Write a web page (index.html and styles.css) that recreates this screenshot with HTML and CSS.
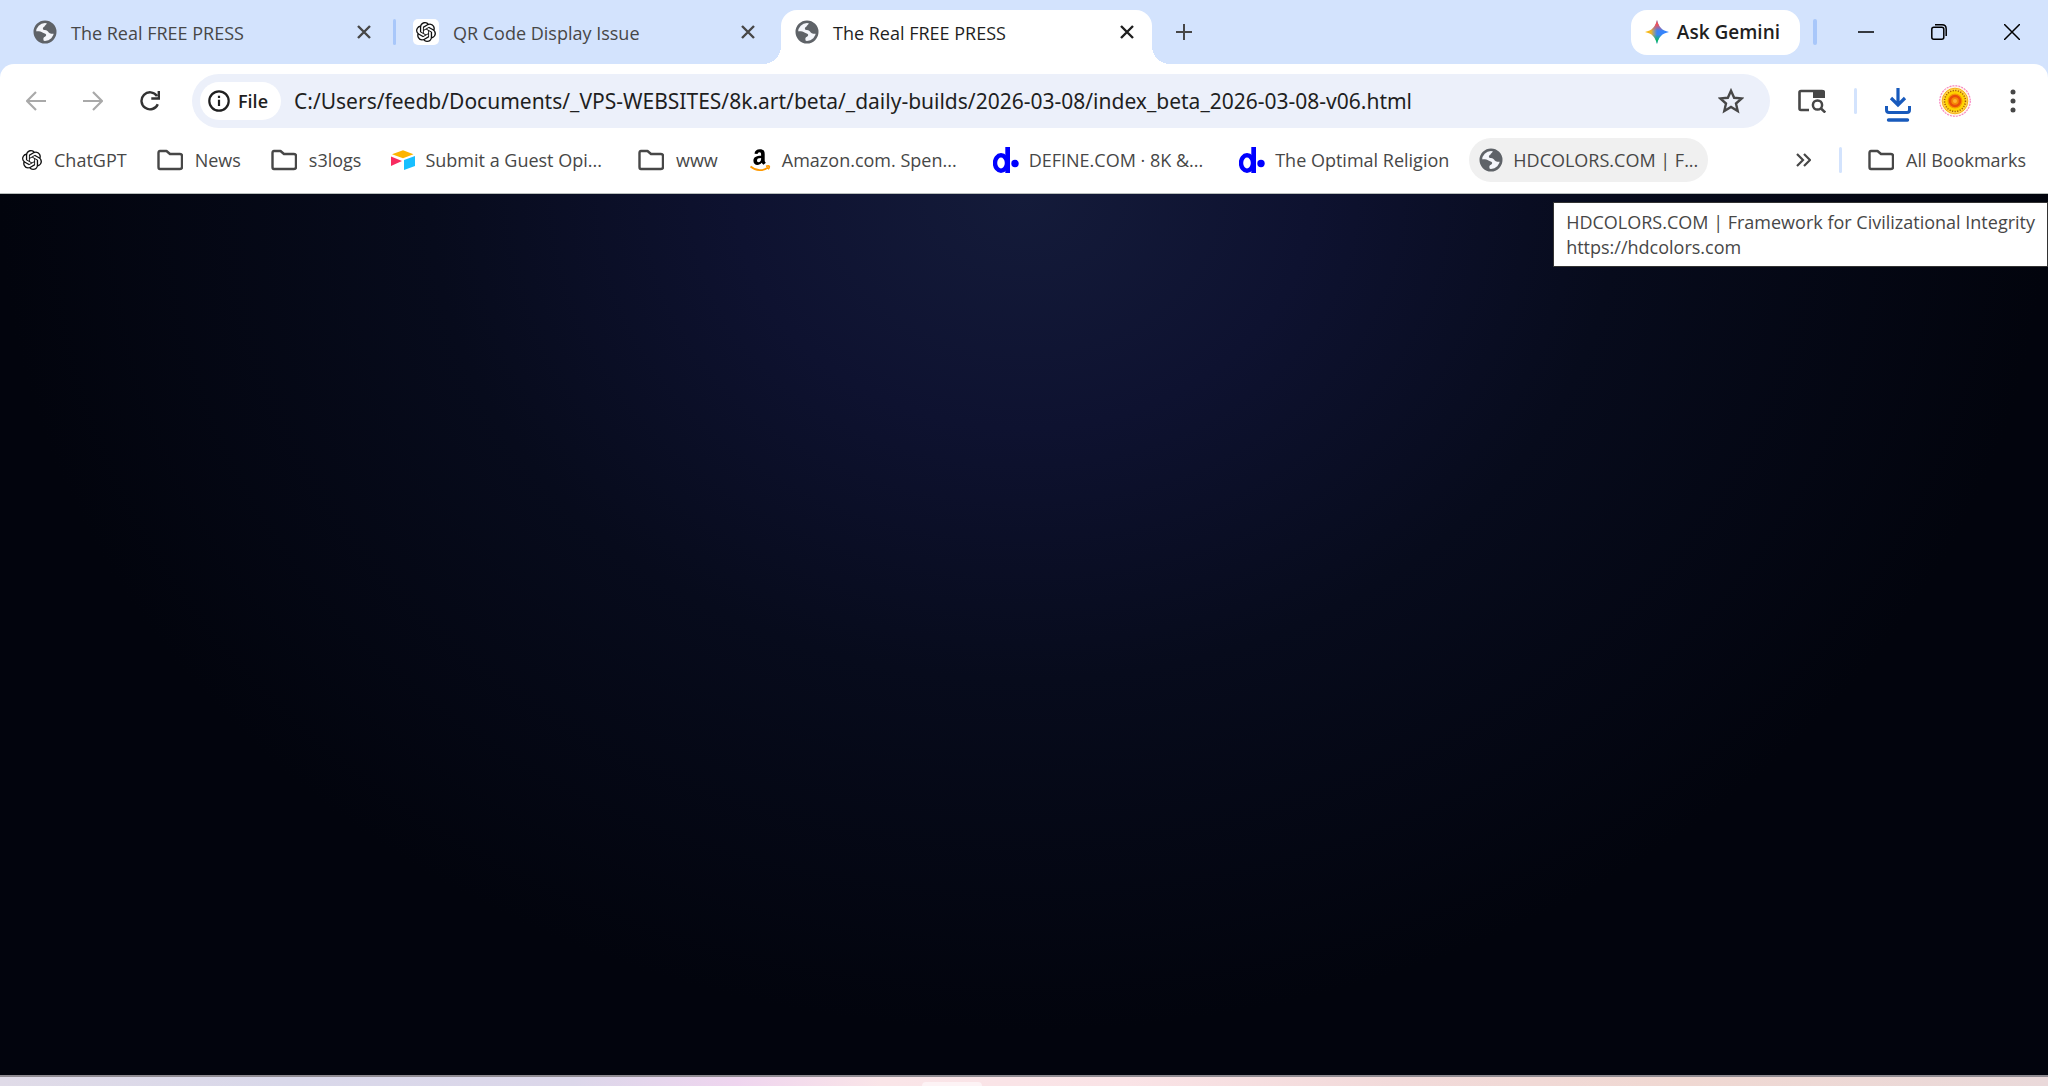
FILE: index.html
```html
<!DOCTYPE html>
<html lang="en">
<head>
    <meta charset="UTF-8">
    <meta name="viewport" content="width=device-width, initial-scale=1.0">
    <title>The Real FREE PRESS</title>
    <link rel="stylesheet" href="styles.css">
</head>
<body>
    <!-- shared icons -->
    <svg class="icon-defs" aria-hidden="true">
        <symbol id="globe" viewBox="0 0 24 24">
            <circle cx="12" cy="12" r="10.200" fill="#f4f6fb" stroke="#5f6368" stroke-width="2.600"/>
            <path d="M14 1.500C14.500 4.500 12 5 11.500 6.500c-1.800.6-2.300 2.600-.6 3.500 1.600.4 3 0 4.100 1.500 1 1.700 3 2.800 7.500 2.200V10C21 5 18 2.500 14 1.500zM1.500 11.500c3.500-.4 6.500-.1 8 1.100 1 .9 3.600.7 3.700 2.500 0 1.700-2.400 1.600-2.800 3.200-.2 1.200.4 2.700.6 4.200C6 22.500 1.500 18 1.500 11.500z" fill="#5f6368"/>
        </symbol>
        <symbol id="openai" viewBox="0 0 24 24">
            <path fill="#111" d="M22.282 9.821a5.985 5.985 0 0 0-.516-4.911 6.046 6.046 0 0 0-6.510-2.900A6.065 6.065 0 0 0 4.981 4.182a5.985 5.985 0 0 0-3.998 2.900 6.046 6.046 0 0 0 .743 7.097 5.980 5.980 0 0 0 .511 4.911 6.051 6.051 0 0 0 6.515 2.900A5.985 5.985 0 0 0 13.260 24a6.056 6.056 0 0 0 5.772-4.206 5.989 5.989 0 0 0 3.998-2.900 6.056 6.056 0 0 0-.748-7.073zm-9.022 12.608a4.476 4.476 0 0 1-2.876-1.041l.142-.080 4.778-2.758a.795.795 0 0 0 .393-.681v-6.737l2.020 1.169a.071.071 0 0 1 .038.052v5.583a4.504 4.504 0 0 1-4.495 4.494zm-9.661-4.125a4.471 4.471 0 0 1-.535-3.014l.142.085 4.783 2.758a.771.771 0 0 0 .781 0l5.843-3.369v2.332a.080.080 0 0 1-.033.062L9.740 19.950a4.499 4.499 0 0 1-6.141-1.646zM2.341 7.896a4.485 4.485 0 0 1 2.366-1.973V11.600a.766.766 0 0 0 .388.677l5.814 3.354-2.020 1.169a.076.076 0 0 1-.071 0l-4.830-2.787A4.504 4.504 0 0 1 2.341 7.872zm16.596 3.856L13.104 8.364 15.119 7.200a.076.076 0 0 1 .071 0l4.830 2.791a4.494 4.494 0 0 1-.677 8.104v-5.677a.790.790 0 0 0-.407-.667zm2.011-3.023l-.142-.085-4.774-2.782a.776.776 0 0 0-.785 0L9.409 9.230V6.897a.066.066 0 0 1 .028-.062l4.830-2.787a4.499 4.499 0 0 1 6.680 4.660zM8.307 12.863l-2.020-1.164a.080.080 0 0 1-.038-.057V6.074a4.499 4.499 0 0 1 7.376-3.454l-.142.081L8.704 5.459a.795.795 0 0 0-.393.681zm1.098-2.365l2.602-1.500 2.607 1.500v2.999l-2.597 1.500-2.607-1.500z"/>
        </symbol>
        <symbol id="close" viewBox="0 0 14 14">
            <path d="M1 1l12 12M13 1L1 13" fill="none" stroke="currentColor" stroke-width="2.400"/>
        </symbol>
        <symbol id="folder" viewBox="0 0 26 22">
            <path d="M3 2h6.500l3.500 3h10q2 0 2 2v11q0 2-2 2H3q-1.500 0-1.500-2V4q0-2 1.500-2z" fill="none" stroke="#474747" stroke-width="2.400" stroke-linejoin="round"/>
        </symbol>
        <symbol id="define" viewBox="0 0 26 26">
            <ellipse cx="8" cy="16" rx="6" ry="7.700" fill="none" stroke="#00f" stroke-width="4.400"/>
            <path d="M12.300 0H17v26h-4.700z" fill="#00f"/>
            <circle cx="22" cy="16.500" r="3.700" fill="#00f"/>
        </symbol>
    </svg>

    <header class="browser">
        <div class="tab-strip">
            <div class="tab">
                <svg class="favicon"><use href="#globe"/></svg>
                <span class="tab-title">The Real FREE PRESS</span>
                <button class="tab-close" aria-label="Close tab"><svg><use href="#close"/></svg></button>
            </div>
            <span class="tab-divider"></span>
            <div class="tab">
                <span class="favicon-box"><svg><use href="#openai"/></svg></span>
                <span class="tab-title">QR Code Display Issue</span>
                <button class="tab-close" aria-label="Close tab"><svg><use href="#close"/></svg></button>
            </div>
            <div class="tab active">
                <svg class="favicon"><use href="#globe"/></svg>
                <span class="tab-title">The Real FREE PRESS</span>
                <button class="tab-close" aria-label="Close tab"><svg><use href="#close"/></svg></button>
            </div>
            <button class="new-tab" aria-label="New tab">
                <svg viewBox="0 0 16 16"><path d="M8 0v16M0 8h16" stroke="#474747" stroke-width="2"/></svg>
            </button>
            <button class="gemini-btn">
                <svg viewBox="0 0 24 24">
                    <defs>
                        <linearGradient id="star-h" x1="0" x2="1"><stop offset="0" stop-color="#fbbc04"/><stop offset=".25" stop-color="#f0b429"/><stop offset=".5" stop-color="#3b82f6"/><stop offset="1" stop-color="#3186ff"/></linearGradient>
                        <linearGradient id="star-v" x1="0" x2="0" y1="0" y2="1"><stop offset="0" stop-color="#f94543"/><stop offset=".2" stop-color="#f0525b"/><stop offset=".45" stop-color="#f0525b" stop-opacity="0"/><stop offset=".6" stop-color="#08b962" stop-opacity="0"/><stop offset=".85" stop-color="#08b962"/></linearGradient>
                    </defs>
                    <path d="M12 0C13.500 7 17 10.500 24 12 17 13.500 13.500 17 12 24 10.500 17 7 13.500 0 12 7 10.500 10.500 7 12 0z" fill="url(#star-h)"/>
                    <path d="M12 0C13.500 7 17 10.500 24 12 17 13.500 13.500 17 12 24 10.500 17 7 13.500 0 12 7 10.500 10.500 7 12 0z" fill="url(#star-v)"/>
                </svg>
                Ask Gemini
            </button>
            <span class="window-divider"></span>
            <div class="window-buttons">
                <button aria-label="Minimize"><svg viewBox="0 0 16 16"><path d="M0 8h16" stroke="#000" stroke-width="1.500"/></svg></button>
                <button aria-label="Restore"><svg viewBox="0 0 16 16"><rect x=".8" y="3.200" width="12" height="12" rx="2" fill="none" stroke="#000" stroke-width="1.500"/><path d="M4 .8h7q4.200 0 4.200 4.200v7" fill="none" stroke="#000" stroke-width="1.500"/></svg></button>
                <button aria-label="Close"><svg viewBox="0 0 16 16"><path d="M0 0l16 16M16 0L0 16" stroke="#000" stroke-width="1.500"/></svg></button>
            </div>
        </div>

        <div class="toolbar">
            <nav class="nav-buttons">
                <button aria-label="Back" disabled><svg viewBox="0 0 20 20"><path d="M20 10H2M10 1l-9 9 9 9" fill="none" stroke="#a9a9a9" stroke-width="2.200"/></svg></button>
                <button aria-label="Forward" disabled><svg viewBox="0 0 20 20"><path d="M0 10h18M10 1l9 9-9 9" fill="none" stroke="#a9a9a9" stroke-width="2.200"/></svg></button>
                <button aria-label="Reload"><svg viewBox="0 0 20 20"><path d="M17.800 13.200A8.500 8.500 0 1 1 17 5M18.800 0v7.500h-7.500" fill="none" stroke="#333" stroke-width="2.400"/></svg></button>
            </nav>
            <div class="address-bar">
                <button class="file-chip">
                    <svg viewBox="0 0 22 22"><circle cx="11" cy="11" r="9.700" fill="none" stroke="#1f1f1f" stroke-width="2.200"/><path d="M11 9.800v6.200M11 5.800v2.300" stroke="#1f1f1f" stroke-width="2.200"/></svg>
                    File
                </button>
                <input class="url" type="text" aria-label="Address" value="C:/Users/feedb/Documents/_VPS-WEBSITES/8k.art/beta/_daily-builds/2026-03-08/index_beta_2026-03-08-v06.html">
                <button class="star-btn" aria-label="Bookmark this page">
                    <svg viewBox="0 0 24 24"><path d="M12 2.500l2.900 6.500 7 .6-5.300 4.700 1.600 6.900L12 17.500l-6.200 3.700 1.600-6.900L2.100 9.600l7-.6z" fill="none" stroke="#474747" stroke-width="2.200"/></svg>
                </button>
            </div>
            <div class="toolbar-actions">
                <button aria-label="Search in page">
                    <svg class="lens-icon" viewBox="0 0 28 24"><path d="M11 21H3q-1.500 0-1.500-1.500v-16Q1.500 2 3 2h21q1.500 0 1.500 1.500V8" fill="none" stroke="#474747" stroke-width="2.600"/><path d="M15 1h10q2 0 2 2v6H15z" fill="#474747"/><circle cx="19.500" cy="16" r="4.600" fill="none" stroke="#474747" stroke-width="2.500"/><path d="M23 19.500l4.300 4" stroke="#474747" stroke-width="2.600"/></svg>
                </button>
                <span class="bar-divider"></span>
                <button aria-label="Downloads">
                    <svg class="download-icon" viewBox="0 0 26 34"><path d="M13 0v17M6 10l7 7 7-7" fill="none" stroke="#185abc" stroke-width="3.200"/><path d="M1.500 18v4q0 2.500 2.500 2.500h18q2.500 0 2.500-2.500v-4" fill="none" stroke="#185abc" stroke-width="3"/><path d="M3.500 32h19" stroke="#185abc" stroke-width="3.400" stroke-linecap="round"/></svg>
                </button>
                <button aria-label="Profile">
                    <svg class="avatar" viewBox="0 0 32 32"><circle cx="16" cy="16" r="15.300" fill="#fff5e6" stroke="#f77fc0" stroke-width="1.100" stroke-dasharray="2 1"/><circle cx="16" cy="16" r="12.800" fill="#ffd54a" stroke="#f6b21a"/><circle cx="16" cy="16" r="10.500" fill="#ffd400" stroke="#a85b00" stroke-width="1.500" stroke-dasharray="1.200 1.400"/><circle cx="16" cy="16" r="7.500" fill="#f79a00"/><circle cx="16" cy="16" r="5" fill="#f58a07" stroke="#e94e0a" stroke-width="2.500"/><circle cx="16" cy="16" r="2" fill="#ffb52e"/></svg>
                </button>
                <button aria-label="Menu">
                    <svg class="menu-icon" viewBox="0 0 6 24"><circle cx="3" cy="3" r="2.500"/><circle cx="3" cy="12" r="2.500"/><circle cx="3" cy="21" r="2.500"/></svg>
                </button>
            </div>
        </div>

        <nav class="bookmarks">
            <a href="#"><svg class="small-icon"><use href="#openai"/></svg>ChatGPT</a>
            <a href="#" class="folder"><svg><use href="#folder"/></svg>News</a>
            <a href="#" class="folder"><svg><use href="#folder"/></svg>s3logs</a>
            <a href="#" class="site"><svg viewBox="0 0 24 20"><path d="M1 4.200L12 .3l10.500 3.900L12 8.200z" fill="#fcb400"/><path d="M13 10l11-4v10l-11 4z" fill="#18bfff"/><path d="M0 6.500l11 4.500L0 16z" fill="#f82b60"/></svg>Submit a Guest Opi...</a>
            <a href="#" class="folder"><svg><use href="#folder"/></svg>www</a>
            <a href="#" class="site"><svg viewBox="0 0 20 24"><path d="M4.500 5.800C4.700 2.700 6.700 1.200 9.800 1.200c3.400 0 4.900 1.600 4.900 4.700v6.300c0 1.200.4 1.700 1.200 2.600l-2.400 1.900c-.9-.6-1.400-1.200-1.800-1.900-1.200 1.400-2.500 2.100-4.200 2.100-2.500 0-4.100-1.500-4.100-4.200 0-3.600 2.700-4.900 7.700-5V6.500c0-1.600-.4-2.300-1.600-2.300S7.800 4.900 7.600 6.100zm6.600 4.200c-2.900 0-4.100.8-4.100 2.500 0 1 .5 1.700 1.500 1.700 1.600 0 2.600-1.200 2.600-3.400z" fill="#000"/><path d="M.5 18.500c5.500 4.800 13 4.600 17.500 1M16 18.300c1.500-.4 3-.4 3.200 0s-.3 2-1.100 3" fill="none" stroke="#f90" stroke-width="1.700"/></svg>Amazon.com. Spen...</a>
            <a href="#" class="site define"><svg><use href="#define"/></svg>DEFINE.COM · 8K &amp;...</a>
            <a href="#" class="site define"><svg><use href="#define"/></svg>The Optimal Religion</a>
            <a href="#" class="hovered"><svg><use href="#globe"/></svg>HDCOLORS.COM | F...</a>
            <button class="more-btn" aria-label="More bookmarks">
                <svg viewBox="0 0 15 14"><path d="M1 1l6 6-6 6M8 1l6 6-6 6" fill="none" stroke="#474747" stroke-width="2.200"/></svg>
            </button>
            <span class="bar-divider"></span>
            <a href="#" class="folder all"><svg><use href="#folder"/></svg>All Bookmarks</a>
        </nav>
        <div class="tooltip" role="tooltip">HDCOLORS.COM | Framework for Civilizational Integrity<br>https://hdcolors.com</div>
    </header>

    <main class="page"></main>
    <footer class="taskbar"><span class="taskbar-item"></span></footer>
</body>
</html>
```

FILE: styles.css
```css
* {
    box-sizing: border-box;
}
body {
    margin: 0;
    min-height: 100vh;
    display: flex;
    flex-direction: column;
    font-family: "Open Sans", "Noto Sans", sans-serif;
    font-size: 18px;
    color: #474747;
    background: #02030c;
}
button {
    border: none;
    padding: 0;
    background: none;
    font: inherit;
    color: inherit;
    display: flex;
    align-items: center;
    justify-content: center;
}
svg {
    display: block;
    flex: none;
}
.icon-defs {
    position: absolute;
    width: 0;
    height: 0;
}
.browser {
    position: relative;
    background: #d3e3fd;
    border-bottom: 1px solid #b9bfbd;
}

/* tabs */
.tab-strip {
    display: flex;
    align-items: center;
    height: 64px;
    padding-left: 12px;
}
.tab {
    display: flex;
    align-items: center;
    width: 381px;
    height: 54px;
    padding: 0 22px 0 21px;
    position: relative;
}
.tab-title {
    flex: 1;
    margin-left: 14px;
    padding-top: 2px;
    white-space: nowrap;
}
.favicon {
    width: 24px;
    height: 24px;
}
.favicon-box {
    display: flex;
    align-items: center;
    justify-content: center;
    width: 26px;
    height: 26px;
    background: #fff;
    border-radius: 5px;
}
.favicon-box svg {
    width: 20px;
    height: 20px;
}
.tab-close svg {
    width: 14px;
    height: 14px;
}
.tab-divider {
    width: 3px;
    height: 26px;
    border-radius: 2px;
    background: #a8c7fa;
}
.tab-divider + .tab {
    padding-left: 17px;
}
.tab.active {
    align-self: flex-end;
    width: 371px;
    background: #fff;
    color: #1f1f1f;
    border-radius: 16px 16px 0 0;
    padding: 0 18px 10px 14px;
    margin-left: 4px;
}
.tab.active::before,
.tab.active::after {
    content: "";
    position: absolute;
    bottom: 0;
    width: 18px;
    height: 18px;
}
.tab.active::before {
    right: 100%;
    background: radial-gradient(circle at 0 0, #d3e3fd 18px, #fff 18px);
}
.tab.active::after {
    left: 100%;
    background: radial-gradient(circle at 100% 0, #d3e3fd 18px, #fff 18px);
}
.new-tab {
    margin-left: 24px;
}
.new-tab svg {
    width: 16px;
    height: 16px;
}
.gemini-btn {
    gap: 8px;
    height: 45px;
    margin-left: auto;
    padding: 0 20px 0 14px;
    border-radius: 16px;
    background: #fff;
    color: #1f1f1f;
    font-size: 19px;
    font-weight: 600;
}
.gemini-btn svg {
    width: 24px;
    height: 24px;
}
.window-divider {
    width: 4px;
    height: 26px;
    margin-left: 13px;
    border-radius: 2px;
    background: #a8c7fa;
}
.window-buttons {
    display: flex;
    margin-left: 12px;
}
.window-buttons button {
    width: 73px;
    height: 48px;
}
.window-buttons svg {
    width: 16px;
    height: 16px;
}

/* address row */
.toolbar {
    display: flex;
    align-items: center;
    height: 74px;
    padding: 0 32px 0 26px;
    background: #fff;
    border-radius: 14px 14px 0 0;
}
.nav-buttons {
    display: flex;
    gap: 37px;
}
.nav-buttons svg {
    width: 20px;
    height: 20px;
}
.address-bar {
    flex: 1;
    display: flex;
    align-items: center;
    height: 54px;
    margin-left: 32px;
    padding: 0 26px 0 8px;
    border-radius: 27px;
    background: #ecf0fa;
    color: #1f1f1f;
}
.file-chip {
    gap: 8px;
    height: 38px;
    padding: 0 13px 0 8px;
    border-radius: 19px;
    background: #fff;
    font-weight: 600;
}
.file-chip svg {
    width: 22px;
    height: 22px;
}
.url {
    flex: 1;
    min-width: 0;
    margin-left: 13px;
    padding: 0;
    border: none;
    outline: none;
    background: none;
    font-family: "Noto Sans", "Open Sans", sans-serif;
    font-size: 21px;
    color: #1f1f1f;
}
.star-btn svg {
    width: 26px;
    height: 26px;
}
.toolbar-actions {
    display: flex;
    align-items: center;
    gap: 28px;
    margin-left: 28px;
}
.lens-icon {
    width: 28px;
    height: 24px;
}
.bar-divider {
    width: 3px;
    height: 26px;
    border-radius: 2px;
    background: #d3e3fd;
}
.download-icon {
    width: 26px;
    height: 34px;
    margin-top: 8px;
}
.avatar {
    width: 32px;
    height: 32px;
}
.menu-icon {
    width: 6px;
    height: 24px;
    margin-left: 11px;
    fill: #474747;
}

/* bookmarks row */
.bookmarks {
    display: flex;
    align-items: center;
    height: 55px;
    padding: 0 22px 11px;
    background: #fff;
}
.bookmarks a {
    display: flex;
    align-items: center;
    gap: 12px;
    margin-right: 30px;
    color: #474747;
    text-decoration: none;
    white-space: nowrap;
}
.bookmarks a svg {
    width: 24px;
    height: 24px;
}
.bookmarks .small-icon {
    width: 20px;
}
.bookmarks .folder svg {
    width: 26px;
    height: 22px;
}
.bookmarks .site {
    gap: 10px;
    margin-right: 36px;
}
.bookmarks .define svg {
    width: 26px;
    height: 26px;
}
.bookmarks .hovered {
    gap: 10px;
    height: 44px;
    margin: 0 0 0 -16px;
    padding: 0 10px;
    border-radius: 22px;
    background: #f0f0f0;
}
.more-btn {
    margin: 0 28px 0 auto;
}
.more-btn svg {
    width: 15px;
    height: 14px;
}
.bookmarks .all {
    margin: 0 0 0 26px;
}
.tooltip {
    position: absolute;
    top: 202px;
    right: 0;
    z-index: 1;
    padding: 7px 12px 6px;
    border: 1px solid #333;
    background: #fff;
    line-height: 25px;
    white-space: nowrap;
}

/* page area */
.page {
    flex: 1;
    background: radial-gradient(ellipse 50% 95% at 50% 0, #141b3a 0, #0e1230 28%, #070b1c 58%, #02040d 100%);
}
.taskbar {
    height: 11px;
    border-top: 2px solid #8e8a90;
    background: linear-gradient(90deg, #e0dbe8, #d9d8ea 14%, #dcd7ea 28%, #efd5ef 36%, #fae5e8 43%, #fae3e6 55%, #f2dada 68%, #f0d8d2 82%, #ead9da);
}
.taskbar-item {
    display: block;
    width: 60px;
    height: 4px;
    margin: 5px 0 0 45%;
    background: #fdf3f5;
    border-radius: 4px 4px 0 0;
}
```
